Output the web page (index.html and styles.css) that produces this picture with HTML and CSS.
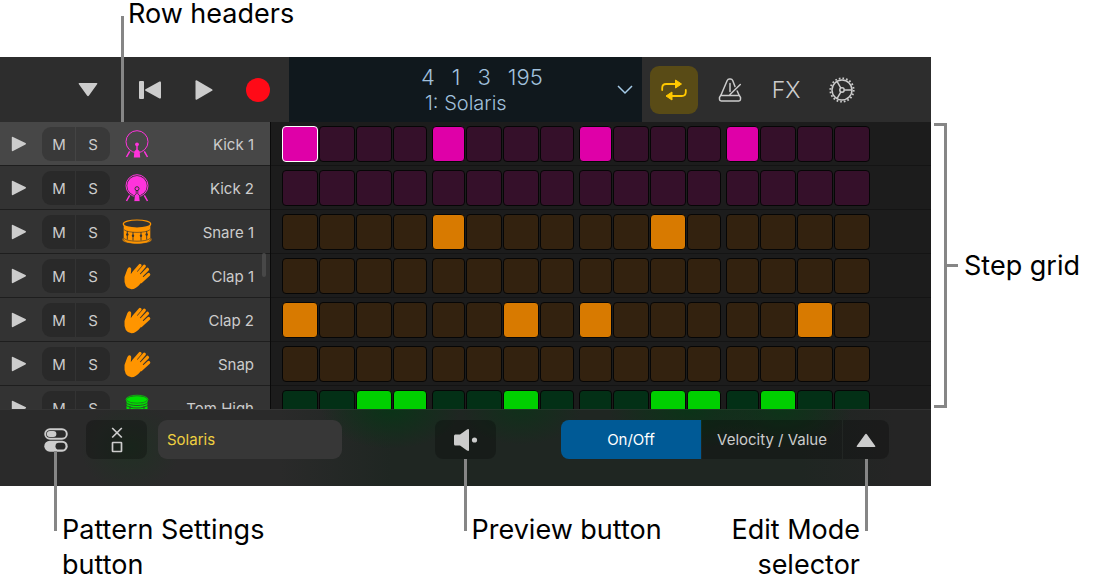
FILE: index.html
```
<!DOCTYPE html>
<html lang="en">
<head>
    <meta charset="utf-8">
    <meta name="viewport" content="width=device-width, initial-scale=1">
    <title>Step Sequencer</title>
    <link rel="stylesheet" href="styles.css">
</head>
<body>
    <!-- Icons used by the row headers -->
    <svg class="sprite" aria-hidden="true">
        <symbol id="icon-play" viewBox="0 0 16 16">
            <path d="M.8 1.6Q.8.5 2 1l12.5 6q1.2.7 0 1.5L2 15q-1.2.5-1.2-.8z" fill="currentColor"/>
        </symbol>
        <symbol id="icon-kick" viewBox="0 0 30 30">
            <circle cx="15" cy="12.7" r="11" fill="none" stroke="currentColor"/>
            <circle cx="15" cy="15.3" r="1.9" fill="currentColor"/>
            <path d="M14.3 16h1.4v4.500l1.900 1.800.6 6.200h-6.400l.6-6.200 1.900-1.800z" fill="currentColor"/>
            <path d="M7.7 22.3 4.5 28M22.3 22.3l3.2 5.7" stroke="currentColor" stroke-width="1.5"/>
        </symbol>
        <symbol id="icon-kick-full" viewBox="0 0 30 30">
            <circle cx="15" cy="12.7" r="11" fill="none" stroke="currentColor"/>
            <circle cx="15" cy="12.7" r="9.8" fill="currentColor"/>
            <path d="M7.7 22.3 4.5 28M22.3 22.3l3.2 5.7" stroke="currentColor" stroke-width="1.5"/>
            <path d="M14.2 18v3l-1.8 1.5-.5 6h6.2l-.5-6-1.8-1.5v-3" fill="currentColor" stroke="#333" stroke-width=".8"/>
            <circle cx="15" cy="15.7" r="2" fill="currentColor" stroke="#333"/>
        </symbol>
        <symbol id="icon-snare" viewBox="0 0 30 30">
            <path d="M1.7 8v14c0 6 26.6 6 26.6 0V8z" fill="currentColor"/>
            <ellipse cx="15" cy="7" rx="13.7" ry="4" fill="#333" stroke="currentColor" stroke-width="1.2"/>
            <path d="M2 12.700c4 3.600 22 3.600 26 0M2 21.500c4 3.600 22 3.600 26 0" fill="none" stroke="#333" stroke-width=".6"/>
            <path d="M5.300 14v8.500M11 15v8.500M19 15v8.500M24.700 14v8.500" stroke="#333" stroke-width=".9"/>
            <g fill="#333"><circle cx="5.300" cy="17.500" r="1.200"/><circle cx="11" cy="18.800" r="1.200"/><circle cx="19" cy="18.800" r="1.200"/><circle cx="24.700" cy="17.500" r="1.200"/></g>
            <path d="M1 21.500v2c4 3.500 24 3.500 28 0v-2" fill="none" stroke="currentColor" stroke-width=".8"/>
        </symbol>
        <symbol id="icon-clap" viewBox="0 0 30 30">
            <path d="M2.500 16 5.200 8.500Q6.200 5.800 8 6.200q1.500.6 1.200 2.600L8.800 13l4.200-4.500 10 9-4.500 5Q14 28.300 9.500 28.300 1.500 27.500 2.500 16z" fill="currentColor"/>
            <path d="M11.500 12 18 4.500M14.300 14.500 22.300 5.200M17 17 25.500 8.300M19 20.500 26.700 13.500" fill="none" stroke="currentColor" stroke-width="3.200" stroke-linecap="round"/>
        </symbol>
        <symbol id="icon-tom" viewBox="0 0 30 30">
            <path d="M4.500 7v17c0 5 21 5 21 0V7z" fill="currentColor"/>
            <ellipse cx="15" cy="6.500" rx="10.800" ry="3.800" fill="currentColor" stroke="#333" stroke-width=".8"/>
            <ellipse cx="15" cy="6.500" rx="11" ry="4.300" fill="none" stroke="currentColor" stroke-width=".7"/>
            <path d="M4 9.500c3 4 19 4 22 0M4 12c3 4 19 4 22 0M8 13v10M22 13v10" fill="none" stroke="#333" stroke-width=".8"/>
        </symbol>
    </svg>

    <main class="figure">
        <div class="app">
            <div class="toolbar">
                <div class="transport">
                    <button class="tool tool-view" aria-label="View">
                        <svg width="20" height="14" viewBox="0 0 20 14"><path d="M1.500 0h17q1.500 0 .6 1.200L11 12.600q-1 1.200-2 0L.9 1.200Q0 0 1.500 0z" fill="#ccc"/></svg>
                    </button>
                    <button class="tool" aria-label="Go to beginning">
                        <svg width="22" height="18" viewBox="0 0 22 18"><rect width="5" height="18" rx="1" fill="#ccc"/><path d="M6.500 8.300 20.500.6Q22 0 22 1.400v15.200q0 1.400-1.500.8L6.500 9.700q-1.200-.7 0-1.400z" fill="#ccc"/></svg>
                    </button>
                    <button class="tool" aria-label="Play">
                        <svg width="18" height="20" viewBox="0 0 18 20"><path d="M.5 1.300Q.5-.2 2 .6l15 8.600q1.200.8 0 1.600L2 19.400q-1.500.8-1.500-.7z" fill="#ccc"/></svg>
                    </button>
                    <button class="tool" aria-label="Record">
                        <svg width="24" height="24" viewBox="0 0 24 24"><circle cx="12" cy="12" r="12" fill="#ff0a17"/></svg>
                    </button>
                </div>

                <div class="lcd">
                    <div class="lcd-text">
                        <div class="position"><span>4</span><span>1</span><span>3</span><span>195</span></div>
                        <div class="song">1: Solaris</div>
                    </div>
                    <button class="lcd-menu" aria-label="Display menu">
                        <svg width="16" height="10" viewBox="0 0 16 10"><path d="m1 1 7 7 7-7" fill="none" stroke="#a5cbe8" stroke-width="1.500"/></svg>
                    </button>
                </div>

                <div class="tools">
                    <button class="tool tool-cycle" aria-label="Cycle" aria-pressed="true">
                        <svg width="26" height="22" viewBox="0 0 26 22">
                            <path d="M1.200 11V9q0-4 4-4H15M24.800 11v2q0 4-4 4H11" fill="none" stroke="#ffc800" stroke-width="1.800" stroke-linecap="round"/>
                            <path d="m14.500 1 6 4-6 4zM11 13l-6 4 6 4z" fill="#ffc800" stroke="#ffc800" stroke-linejoin="round"/>
                        </svg>
                    </button>
                    <button class="tool" aria-label="Metronome">
                        <svg width="24" height="24" viewBox="0 0 24 24" fill="none" stroke="#ccc" stroke-width="1.500" stroke-linecap="round" stroke-linejoin="round">
                            <path d="m17 8.500-2.300-6Q14 1 12.500 1h-1.200Q10 1 9.200 2.500L3 17l-1.500 2.300v2q0 1.700 1.700 1.700h17.600q1.700 0 1.700-1.700v-2L21 17l-1.800-4M3 17.500h18M12 5.500v8M22.300 6.500 12 16.500"/>
                        </svg>
                    </button>
                    <button class="tool tool-fx">FX</button>
                    <button class="tool" aria-label="Settings">
                        <svg width="26" height="26" viewBox="0 0 26 26" fill="none" stroke="#ccc" stroke-width="1.500">
                            <circle cx="13" cy="13" r="11.700" stroke-width="1.800" stroke-dasharray="1.700 1.980"/>
                            <circle cx="13" cy="13" r="10"/>
                            <circle cx="13" cy="13" r="2.200"/>
                            <path d="M15.200 13H23M11.900 11.100 8 4.300M11.900 14.900 8 21.700"/>
                        </svg>
                    </button>
                </div>

                <div class="callout callout-headers">Row headers</div>
            </div>

            <div class="tracks">
                <div id="rows"></div>
                <div class="scroll-thumb"></div>
            </div>

            <div class="controls">
                <div class="anchor anchor-settings">
                    <button class="plain" aria-label="Pattern Settings">
                        <svg width="24" height="24" viewBox="0 0 24 24">
                            <rect x="1.200" y="1.200" width="21.600" height="9.600" rx="4.800" fill="none" stroke="#ccc" stroke-width="1.900"/>
                            <rect x="2.800" y="3" width="9.600" height="6" rx="3" fill="#ccc"/>
                            <rect x=".3" y="12.700" width="23.400" height="11" rx="5.500" fill="#ccc"/>
                            <rect x="11.500" y="14.800" width="10" height="6.800" rx="3.400" fill="#292929"/>
                        </svg>
                    </button>
                    <div class="callout callout-down">Pattern Settings<br>button</div>
                </div>
                <button class="box" aria-label="Clear or fill steps">
                    <svg width="12" height="26" viewBox="0 0 12 26" fill="none" stroke="#ccc" stroke-width="1.700"><path d="m1.200 1 9.600 9.500M10.800 1l-9.600 9.500"/><rect x="1.500" y="15.500" width="9" height="9" rx=".5"/></svg>
                </button>
                <input class="pattern-name" type="text" value="Solaris" aria-label="Pattern name">
                <div class="anchor anchor-preview">
                    <button class="box" aria-label="Preview">
                        <svg width="24" height="22" viewBox="0 0 24 22" fill="#ccc"><path d="M1.200 5.500H6L13 .5q2-1.200 2 .8v19.400q0 2-2 .8l-7-5H1.200Q0 16.500 0 15V7q0-1.500 1.200-1.500z"/><circle cx="20.500" cy="11" r="2.600"/></svg>
                    </button>
                    <div class="callout callout-down">Preview button</div>
                </div>
                <div class="segments">
                    <button class="segment segment-on" aria-pressed="true">On/Off</button>
                    <button class="segment" aria-pressed="false">Velocity / Value</button>
                    <div class="anchor">
                        <button class="segment segment-menu" aria-label="Edit Mode">
                            <svg width="20" height="14" viewBox="0 0 20 14"><path d="M1.500 14h17q1.500 0 .6-1.200L11 1.400q-1-1.200-2 0L.9 12.800Q0 14 1.500 14z" fill="#ccc"/></svg>
                        </button>
                        <div class="callout callout-down callout-left">Edit Mode<br>selector</div>
                    </div>
                </div>
            </div>
        </div>

        <div class="side">
            <div class="bracket"></div>
            <div class="tick"></div>
            <div class="side-label">Step grid</div>
        </div>
    </main>

    <script src="script.js"></script>
</body>
</html>
```

FILE: styles.css
```
* {
    box-sizing: border-box;
}

body {
    margin: 0;
    background: #fff;
    color: #000;
    font-family: Inter, "Liberation Sans", sans-serif;
}

button, input {
    font: inherit;
    color: inherit;
    border: 0;
    padding: 0;
    background: none;
}

button {
    display: flex;
    align-items: center;
    justify-content: center;
}

svg {
    display: block;
    flex: none;
}

.sprite {
    position: absolute;
    width: 0;
    height: 0;
}

/* The padding leaves room for the callouts above and below the app */
.figure {
    display: grid;
    grid-template-columns: minmax(0, 1fr) 179px;
    padding: 57px 0 102px;
}

.app {
    color: #ccc;
    font-size: 15px;
}

/* Toolbar */

.toolbar {
    position: relative;
    display: flex;
    height: 65px;
    background: #2d2d2d;
}

.transport {
    display: flex;
    width: 289px;
    padding-left: 61px;
}

.tool {
    width: 54px;
}

.tool-view {
    margin-right: 8px;
}

.lcd {
    flex: 1;
    display: flex;
    align-items: center;
    padding: 0 9px 0 132px;
    background: #10181d;
    color: #a0c0dc;
}

.lcd-text {
    flex: 1;
    font-size: 20px;
    font-weight: 300;
    line-height: 26px;
    white-space: nowrap;
}

.position {
    display: flex;
    gap: 17px;
    font-size: 22px;
}

.song {
    padding-left: 4px;
}

.tools {
    display: flex;
    align-items: center;
    width: 289px;
    padding-left: 8px;
}

.tools .tool {
    width: 56px;
    height: 48px;
}

.tools .tool-cycle {
    width: 48px;
    margin-right: 4px;
    border-radius: 9px;
    background: #594b16;
}

.tool-fx {
    font-size: 23px;
    font-weight: 300;
}

/* Rows */

.tracks {
    position: relative;
    max-height: 287px;
    overflow: hidden;
}

.row {
    display: flex;
    height: 44px;
}

.row-header {
    display: flex;
    align-items: center;
    width: 271px;
    padding: 0 16px 0 11px;
    border-right: 1px solid #0a0a0a;
    background: #333;
    box-shadow: inset 0 -1px #1e1e1e;
}

.row-selected .row-header {
    background: #474747;
}

.mute-solo {
    display: flex;
    margin: 0 12px 0 15px;
}

.mute-solo button {
    width: 34px;
    height: 34px;
    background: #292929;
}

.row-selected .mute-solo button {
    background: #393939;
}

.mute-solo button:first-child {
    border-radius: 9px 0 0 9px;
    box-shadow: inset -1px 0 #333;
}

.row-selected .mute-solo button:first-child {
    box-shadow: inset -1px 0 #444;
}

.mute-solo button:last-child {
    border-radius: 0 9px 9px 0;
}

.row-name {
    flex: 1;
    text-align: right;
    white-space: nowrap;
}

.pink {
    color: #ff33dc;
}

.orange {
    color: #ff9500;
}

.green {
    color: #00e000;
}

.steps {
    flex: 1;
    display: grid;
    grid-template-columns: 145fr 142fr 142fr 144fr;
    gap: 5px;
    align-items: center;
    padding: 0 61px 0 11px;
    background: #1c1c1c;
    box-shadow: inset 0 -1px #141414;
}

.beat {
    display: grid;
    grid-template-columns: 33fr 36fr 36fr 34fr;
    gap: 1px;
}

.beat:first-child {
    grid-template-columns: 36fr 36fr 36fr 34fr;
}

.beat:last-child {
    grid-template-columns: 33fr 36fr 36fr 36fr;
}

.step {
    height: 36px;
    border: 1px solid #060606;
    border-radius: 4px;
}

.step-pink {
    background: #35102a;
}

.step-orange {
    background: #33220f;
}

.step-green {
    background: #033016;
}

.step-pink.on {
    background: #df00a8;
}

.step-orange.on {
    background: #d87a00;
}

.step-green.on {
    background: #00cf00;
}

.step.focused {
    border-color: #fff;
}

.scroll-thumb {
    position: absolute;
    top: 131px;
    left: 262px;
    width: 4px;
    height: 24px;
    border-radius: 2px;
    background: #484848;
}

.controls {
    display: flex;
    align-items: flex-start;
    height: 77px;
    padding: 11px 42px 0 44px;
    background:
        radial-gradient(70px 40px at 42% 0, #0a3417, transparent),
        radial-gradient(60px 36px at 56% 0, #10301a, transparent),
        radial-gradient(80px 40px at 74% 0, #0a3417, transparent),
        radial-gradient(70px 40px at 84% 0, #0c3518, transparent),
        radial-gradient(50px 45px at 14% 50%, #213024, transparent),
        linear-gradient(90deg, #2a2a2a 30%, #1f2622 42%, #1f2622 86%, #252525 96%);
    box-shadow: inset 0 1px rgba(255, 255, 255, .05);
}

.anchor {
    position: relative;
}

.plain {
    width: 24px;
    height: 39px;
}

.box {
    width: 61px;
    height: 39px;
    border-radius: 8px;
    background: rgba(0, 0, 0, .25);
}

.anchor-settings {
    margin-right: 18px;
}

.pattern-name {
    flex: 0 1 184px;
    min-width: 0;
    height: 39px;
    margin: 0 auto 0 11px;
    padding: 0 9px;
    border-radius: 9px;
    background: #373737;
    color: #f0d040;
}

.anchor-preview {
    margin-right: 65px;
}

.segments {
    display: flex;
    gap: 1px;
}

.segment {
    width: 140px;
    height: 39px;
    background: rgba(0, 0, 0, .25);
    white-space: nowrap;
}

.segment-on {
    border-radius: 8px 0 0 8px;
    background: #005a96;
    color: #fff;
}

.segment-menu {
    width: 46px;
    border-radius: 0 8px 8px 0;
}

/* Callouts */

.callout {
    position: absolute;
    color: #000;
    font-size: 27px;
    line-height: 35px;
    white-space: nowrap;
}

.callout::before {
    content: "";
    position: absolute;
    width: 3px;
    background: #868686;
}

.callout-headers {
    left: 128px;
    top: -57px;
    line-height: 28px;
}

.callout-headers::before {
    left: -7px;
    top: 16px;
    height: 106px;
}

.callout-down {
    top: 92px;
    left: 50%;
    padding-left: 6px;
}

.callout-down::before {
    left: -2px;
    top: -53px;
    height: 72px;
}

.anchor-settings .callout-down::before {
    top: -61px;
    height: 80px;
}

.callout-left {
    left: auto;
    right: 50%;
    padding: 0 6px 0 0;
    text-align: right;
}

.callout-left::before {
    left: auto;
    right: -2px;
}

.side {
    display: flex;
    align-items: center;
    height: 285px;
    margin-top: 66px;
    padding-left: 3px;
    font-size: 27px;
    line-height: 35px;
    white-space: nowrap;
}

.bracket {
    width: 13px;
    height: 100%;
    border: solid #868686;
    border-width: 3px 3px 3px 0;
}

.tick {
    width: 11px;
    height: 3px;
    background: #868686;
}

.side-label {
    margin-left: 6px;
}
```

FILE: script.js
```
// Steps that are on, four characters for each beat.
var rows = [
    { name: 'Kick 1', icon: 'kick', color: 'pink', pattern: 'x... x... x... x...', selected: true },
    { name: 'Kick 2', icon: 'kick-full', color: 'pink', pattern: '.... .... .... ....' },
    { name: 'Snare 1', icon: 'snare', color: 'orange', pattern: '.... x... ..x. ....' },
    { name: 'Clap 1', icon: 'clap', color: 'orange', pattern: '.... .... .... ....' },
    { name: 'Clap 2', icon: 'clap', color: 'orange', pattern: 'x... ..x. x... ..x.' },
    { name: 'Snap', icon: 'clap', color: 'orange', pattern: '.... .... .... ....' },
    { name: 'Tom High', icon: 'tom', color: 'green', pattern: '..xx ..x. ..xx .x..' }
];

// Returns the sixteen steps of a row, grouped by beat.
function drawSteps(row) {
    var html = '';
    var number = 0;

    row.pattern.split(' ').forEach(function(beat) {
        html += '<div class="beat">';
        beat.split('').forEach(function(step) {
            number++;
            var on = step == 'x';
            var focused = row.selected && number == 1;
            html += '<button class="step step-' + row.color + (on ? ' on' : '') + (focused ? ' focused' : '') + '"' +
                ' aria-pressed="' + on + '" aria-label="' + row.name + ' step ' + number + '"></button>';
        });
        html += '</div>';
    });

    return html;
}

function drawRow(row) {
    return '<div class="row' + (row.selected ? ' row-selected' : '') + '">' +
        '<div class="row-header">' +
            '<button aria-label="Play ' + row.name + '"><svg width="16" height="16"><use href="#icon-play"/></svg></button>' +
            '<div class="mute-solo">' +
                '<button aria-label="Mute ' + row.name + '">M</button>' +
                '<button aria-label="Solo ' + row.name + '">S</button>' +
            '</div>' +
            '<svg class="' + row.color + '" width="30" height="30"><use href="#icon-' + row.icon + '"/></svg>' +
            '<span class="row-name">' + row.name + '</span>' +
        '</div>' +
        '<div class="steps">' + drawSteps(row) + '</div>' +
    '</div>';
}

document.getElementById('rows').innerHTML = rows.map(drawRow).join('');

// Toggles a step when it is clicked.
document.getElementById('rows').onclick = function(event) {
    if (event.target.classList.contains('step')) {
        var on = event.target.classList.toggle('on');
        event.target.setAttribute('aria-pressed', on);
    }
};
```
